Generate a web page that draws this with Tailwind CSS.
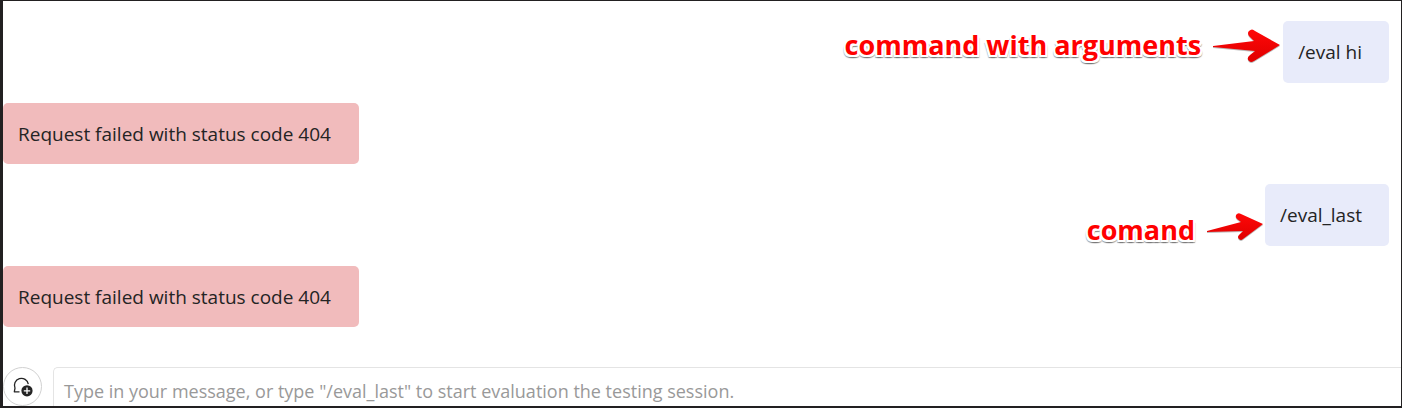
<!DOCTYPE html>
<html lang="en">
<head>
<meta charset="utf-8">
<meta name="viewport" content="width=device-width, initial-scale=1">
<title>Chat</title>
<script src="https://cdn.jsdelivr.net/npm/@tailwindcss/browser@4"></script>
</head>
<body class="flex h-screen flex-col overflow-hidden border-t border-r border-b-2 border-l-3 border-[#222021] bg-white font-['Open_Sans',sans-serif] text-[19px] text-[#242424]">
<main class="flex flex-col gap-5 pt-5 pr-3">
  <div class="relative self-end rounded-[5px] bg-[#e8ebfa] py-4 pr-[27px] pl-[15px] leading-[30px]">
    <p>/eval hi</p>
    <div class="absolute top-[6px] right-full mr-[3px] flex items-center gap-3 whitespace-nowrap">
      <span class="text-[27px] leading-9 font-bold text-[#ff0000] [text-shadow:2px_0_#fff,-2px_0_#fff,0_2px_#fff,0_-2px_#fff,2px_2px_#fff,-2px_2px_#fff,0_3px_1px_#777,2px_3px_1px_#999,-2px_3px_1px_#999]">command with arguments</span>
      <svg class="h-9 w-[67px] shrink-0" viewBox="0 0 67 36" aria-hidden="true">
        <defs><linearGradient id="red" x2="0" y2="1"><stop stop-color="#ff0808"/><stop offset="1" stop-color="#df0000"/></linearGradient></defs>
        <path d="M0 19 41 14 36 9Q34 6 36 4 39 1 42 4L67 18 41 34Q38 36 36 34 33 31 37 28L42 24 0 20Z" fill="#777" opacity=".5" transform="translate(0 1)"/>
        <path d="M0 19 41 14 36 9Q34 6 36 4 39 1 42 4L67 18 41 34Q38 36 36 34 33 31 37 28L42 24 0 20Z" fill="url(#red)"/>
      </svg>
    </div>
  </div>
  <p class="self-start rounded-[5px] bg-[#f1bbbc] pt-[17px] pr-7 pb-[15px] pl-[15px] leading-[29px]">Request failed with status code 404</p>
  <div class="relative self-end rounded-[5px] bg-[#e8ebfa] py-4 pr-[27px] pl-[15px] leading-[30px]">
    <p>/eval_last</p>
    <div class="absolute top-7 right-full mr-[2px] flex items-center gap-3 whitespace-nowrap">
      <span class="text-[27px] leading-9 font-bold text-[#ff0000] [text-shadow:2px_0_#fff,-2px_0_#fff,0_2px_#fff,0_-2px_#fff,2px_2px_#fff,-2px_2px_#fff,0_3px_1px_#777,2px_3px_1px_#999,-2px_3px_1px_#999]">comand</span>
      <svg class="h-9 w-14 shrink-0" viewBox="0 0 56 36" aria-hidden="true">
        <path d="M0 19 34 10 30 7Q28 5 29 3 31 0 34 2L56 12 36 27Q34 29 32 27 30 25 32 23L36 19 0 20Z" fill="#777" opacity=".5" transform="translate(0 1)"/>
        <path d="M0 19 34 10 30 7Q28 5 29 3 31 0 34 2L56 12 36 27Q34 29 32 27 30 25 32 23L36 19 0 20Z" fill="url(#red)"/>
      </svg>
    </div>
  </div>
  <p class="self-start rounded-[5px] bg-[#f1bbbc] pt-[17px] pr-7 pb-[15px] pl-[15px] leading-[29px]">Request failed with status code 404</p>
</main>
<form class="mt-10 flex min-h-0 flex-1 gap-[11px]">
  <button type="button" aria-label="New conversation" class="flex size-[39px] shrink-0 items-center justify-center rounded-full border border-[#d1d1d1] bg-white">
    <svg class="size-5" viewBox="0 0 20 20" aria-hidden="true">
      <path d="M6.5 14.8H1.3L2 11.2A7 7 0 1 1 15.3 7.2" fill="none" stroke="#242424" stroke-width="1.3" stroke-linejoin="round"/>
      <circle cx="14" cy="13.8" r="5.6" fill="#242424"/>
      <path d="M14 10.6v6.4M10.8 13.8h6.4" stroke="#fff" stroke-width="1.3"/>
    </svg>
  </button>
  <textarea aria-label="Message" rows="1" class="min-w-0 flex-1 resize-none overflow-hidden rounded-tl-[5px] border-t border-l border-[#e4e4e4] px-[10px] pt-[10px] text-lg leading-[26px] placeholder:text-[#999]" placeholder="Type in your message, or type &quot;/eval_last&quot; to start evaluation the testing session."></textarea>
</form>
</body>
</html>
